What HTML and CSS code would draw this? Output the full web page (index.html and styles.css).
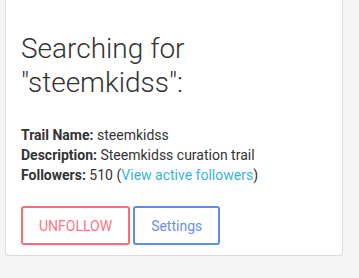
FILE: index.html
```html
<!DOCTYPE html>
<html>
<head>
<meta charset="utf-8">
<link rel="stylesheet" href="styles.css">
</head>
<body>
<div class="card">
  <h2 class="title">Searching for<br>"steemkidss":</h2>
  <div class="info">
    <div><b>Trail Name:</b> steemkidss</div>
    <div><b>Description:</b> Steemkidss curation trail</div>
    <div><b>Followers:</b> 510 (<a href="#" class="link">View active followers</a>)</div>
  </div>
  <div class="actions">
    <button class="btn btn-red">UNFOLLOW</button>
    <button class="btn btn-blue">Settings</button>
  </div>
</div>
</body>
</html>
```
FILE: styles.css
```css
html, body {
  margin: 0;
  padding: 0;
  background: #f5f5f5;
}
body {
  padding: 0 16px 0 5px;
  font-family: Roboto, "Liberation Sans", sans-serif;
  color: #333;
}
.card {
  margin-top: -6px;
  background: #fff;
  border: 1px solid #dcdcdc;
  border-radius: 4px;
  box-shadow: 0 1px 1px rgba(0,0,0,0.05);
  padding: 37px 15px 10px 15px;
  width: 306px;
}
.title {
  margin: 0;
  font-weight: 300;
  font-size: 28px;
  line-height: 33.6px;
  color: #333;
}
.info {
  margin-top: 26px;
  font-size: 14px;
  line-height: 20px;
}
.info b {
  font-weight: 700;
}
.link {
  color: #33b5e5;
  text-decoration: none;
}
.actions {
  margin-top: 21px;
  display: flex;
  gap: 3px;
}
.btn {
  height: 39px;
  padding: 0 16px;
  background: #fff;
  border: 2px solid;
  border-radius: 3px;
  font-family: Roboto, "Liberation Sans", sans-serif;
  font-size: 14px;
}
.btn-red {
  border-color: #ff6b78;
  color: #ff7585;
}
.btn-blue {
  border-color: #5b8dee;
  color: #6b8ff0;
}
```
